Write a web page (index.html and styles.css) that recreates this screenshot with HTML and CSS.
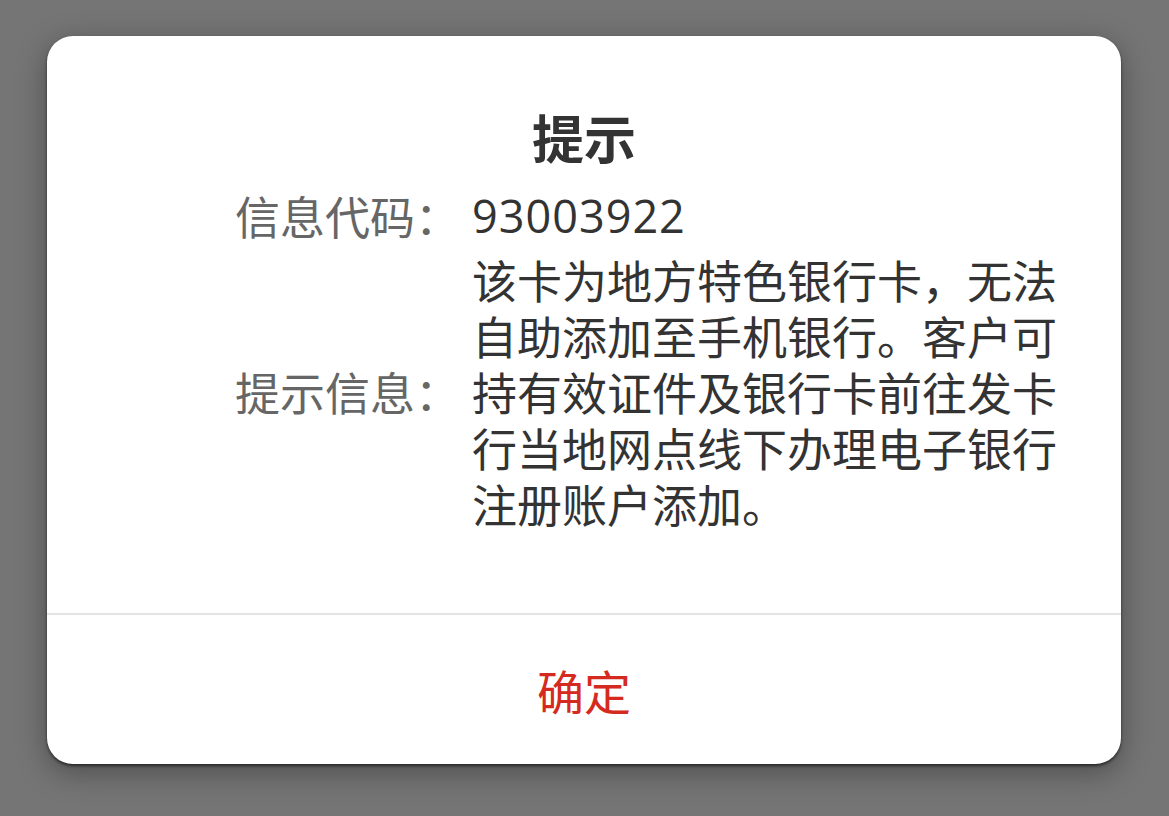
FILE: index.html
```html
<!DOCTYPE html>
<html>
    <head>
        <meta charset="utf-8">
        <title>提示</title>
        <link rel="stylesheet" href="styles.css">
    </head>
    <body>
        <div class="page">
            <div class="dialog">
                <div class="dialog-body">
                    <h2 class="dialog-title">提示</h2>
                    <div class="info-row">
                        <span class="info-label">信息代码：</span>
                        <span class="info-value code">93003922</span>
                    </div>
                    <div class="info-row">
                        <span class="info-label">提示信息：</span>
                        <span class="info-value">该卡为地方特色银行卡，无法自助添加至手机银行。客户可持有效证件及银行卡前往发卡行当地网点线下办理电子银行注册账户添加。</span>
                    </div>
                </div>
                <div class="dialog-footer">
                    <button class="ok-btn">确定</button>
                </div>
            </div>
        </div>
    </body>
</html>
```

FILE: styles.css
```css
html, body {
    margin: 0;
    height: 100%;
    background-color: #757575;
    font-family: "Noto Sans CJK SC", "Noto Sans", sans-serif;
}
.page {
    padding: 36px 48px 0 47px;
}
.dialog {
    background-color: #fff;
    border-radius: 26px;
    box-shadow: 0 2px 3px rgba(0,0,0,0.55), 0 8px 30px rgba(0,0,0,0.35);
    overflow: hidden;
}
.dialog-body {
    padding: 71px 0 81px 188px;
}
.dialog-title {
    margin: 0 0 21px -188px;
    text-align: center;
    font-size: 52px;
    line-height: 60px;
    font-weight: bold;
    color: #333;
}
.info-row {
    display: flex;
    align-items: center;
    font-size: 45px;
    line-height: 56px;
    margin-bottom: 8px;
}
.info-row:last-child {
    margin-bottom: 0;
}
.info-label {
    flex: 0 0 237px;
    color: #666;
}
.info-value {
    width: 590px;
    color: #333;
}
.code {
    font-family: "Open Sans", "Noto Sans CJK SC", sans-serif;
    letter-spacing: 1px;
}
.dialog-footer {
    border-top: 2px solid #e3e3e3;
    height: 149px;
    display: flex;
    align-items: center;
    justify-content: center;
}
.ok-btn {
    border: none;
    background: none;
    font-family: inherit;
    font-size: 47px;
    color: #d42a20;
    padding: 0;
}
```
